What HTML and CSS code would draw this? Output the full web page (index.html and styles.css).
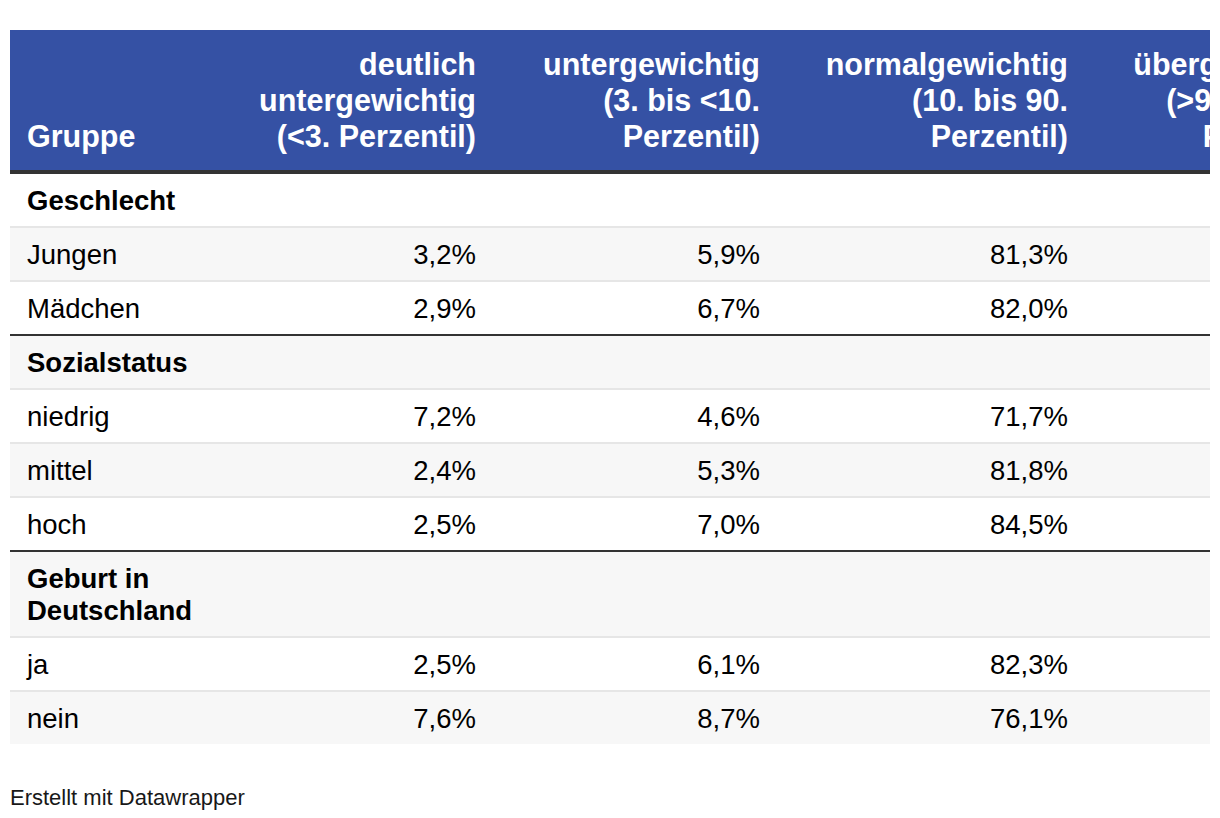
FILE: index.html
```html
<!DOCTYPE html>
<html lang="de">
<head>
<meta charset="utf-8">
<title>Gewicht nach Gruppe</title>
<link rel="stylesheet" href="styles.css">
</head>
<body>
<div class="chart">
  <div class="table-wrap">
    <table class="dw-table">
      <colgroup>
        <col class="c1"><col class="c2"><col class="c3"><col class="c4"><col class="c5">
      </colgroup>
      <thead>
        <tr>
          <th class="left">Gruppe</th>
          <th>deutlich<br>untergewichtig<br>(&lt;3. Perzentil)</th>
          <th>untergewichtig<br>(3. bis &lt;10.<br>Perzentil)</th>
          <th>normalgewichtig<br>(10. bis 90.<br>Perzentil)</th>
          <th>übergewichtig<br>(&gt;90. bis 97.<br>Perzentil)</th>
        </tr>
      </thead>
      <tbody>
        <tr class="group"><td class="left">Geschlecht</td><td></td><td></td><td></td><td></td></tr>
        <tr class="alt"><td class="left">Jungen</td><td>3,2%</td><td>5,9%</td><td>81,3%</td><td></td></tr>
        <tr class="end"><td class="left">Mädchen</td><td>2,9%</td><td>6,7%</td><td>82,0%</td><td></td></tr>
        <tr class="group alt"><td class="left">Sozialstatus</td><td></td><td></td><td></td><td></td></tr>
        <tr><td class="left">niedrig</td><td>7,2%</td><td>4,6%</td><td>71,7%</td><td></td></tr>
        <tr class="alt"><td class="left">mittel</td><td>2,4%</td><td>5,3%</td><td>81,8%</td><td></td></tr>
        <tr class="end"><td class="left">hoch</td><td>2,5%</td><td>7,0%</td><td>84,5%</td><td></td></tr>
        <tr class="group alt"><td class="left">Geburt in<br>Deutschland</td><td></td><td></td><td></td><td></td></tr>
        <tr><td class="left">ja</td><td>2,5%</td><td>6,1%</td><td>82,3%</td><td></td></tr>
        <tr class="alt last"><td class="left">nein</td><td>7,6%</td><td>8,7%</td><td>76,1%</td><td></td></tr>
      </tbody>
    </table>
  </div>
  <div class="footer">Erstellt mit Datawrapper</div>
</div>
</body>
</html>
```
FILE: styles.css
```css
html, body {
  margin: 0;
  padding: 0;
  background: #ffffff;
}

body {
  font-family: "Liberation Sans", Arial, Helvetica, sans-serif;
  color: #000;
}

.chart {
  padding: 30px 10px 0 10px;
}

.table-wrap {
  width: 1200px;
  overflow: hidden;
}

.dw-table {
  table-layout: fixed;
  width: 1347px;
  border-collapse: separate;
  border-spacing: 0;
}

.c1 { width: 232px; }
.c2 { width: 251px; }
.c3 { width: 284px; }
.c4 { width: 308px; }
.c5 { width: 272px; }

.dw-table th {
  background: #3551a4;
  color: #ffffff;
  font-size: 30.5px;
  line-height: 36px;
  font-weight: bold;
  text-align: right;
  vertical-align: bottom;
  white-space: nowrap;
  padding: 16px 17px 16px 17px;
  border-bottom: 4px solid #333333;
}

.dw-table td {
  font-size: 27.5px;
  line-height: 32px;
  text-align: right;
  vertical-align: top;
  white-space: nowrap;
  padding: 11px 17px 9px 17px;
  border-bottom: 2px solid #e6e6e6;
  background: #ffffff;
}

.dw-table .left {
  text-align: left;
}

.dw-table tr.alt td {
  background: #f7f7f7;
}

.dw-table tr.group td {
  font-weight: bold;
}

.dw-table tr.end td {
  border-bottom-color: #333333;
}

.dw-table tr.last td {
  border-bottom: none;
}

.footer {
  margin-top: 41px;
  font-size: 22px;
  line-height: 26px;
  color: #181818;
}
```
